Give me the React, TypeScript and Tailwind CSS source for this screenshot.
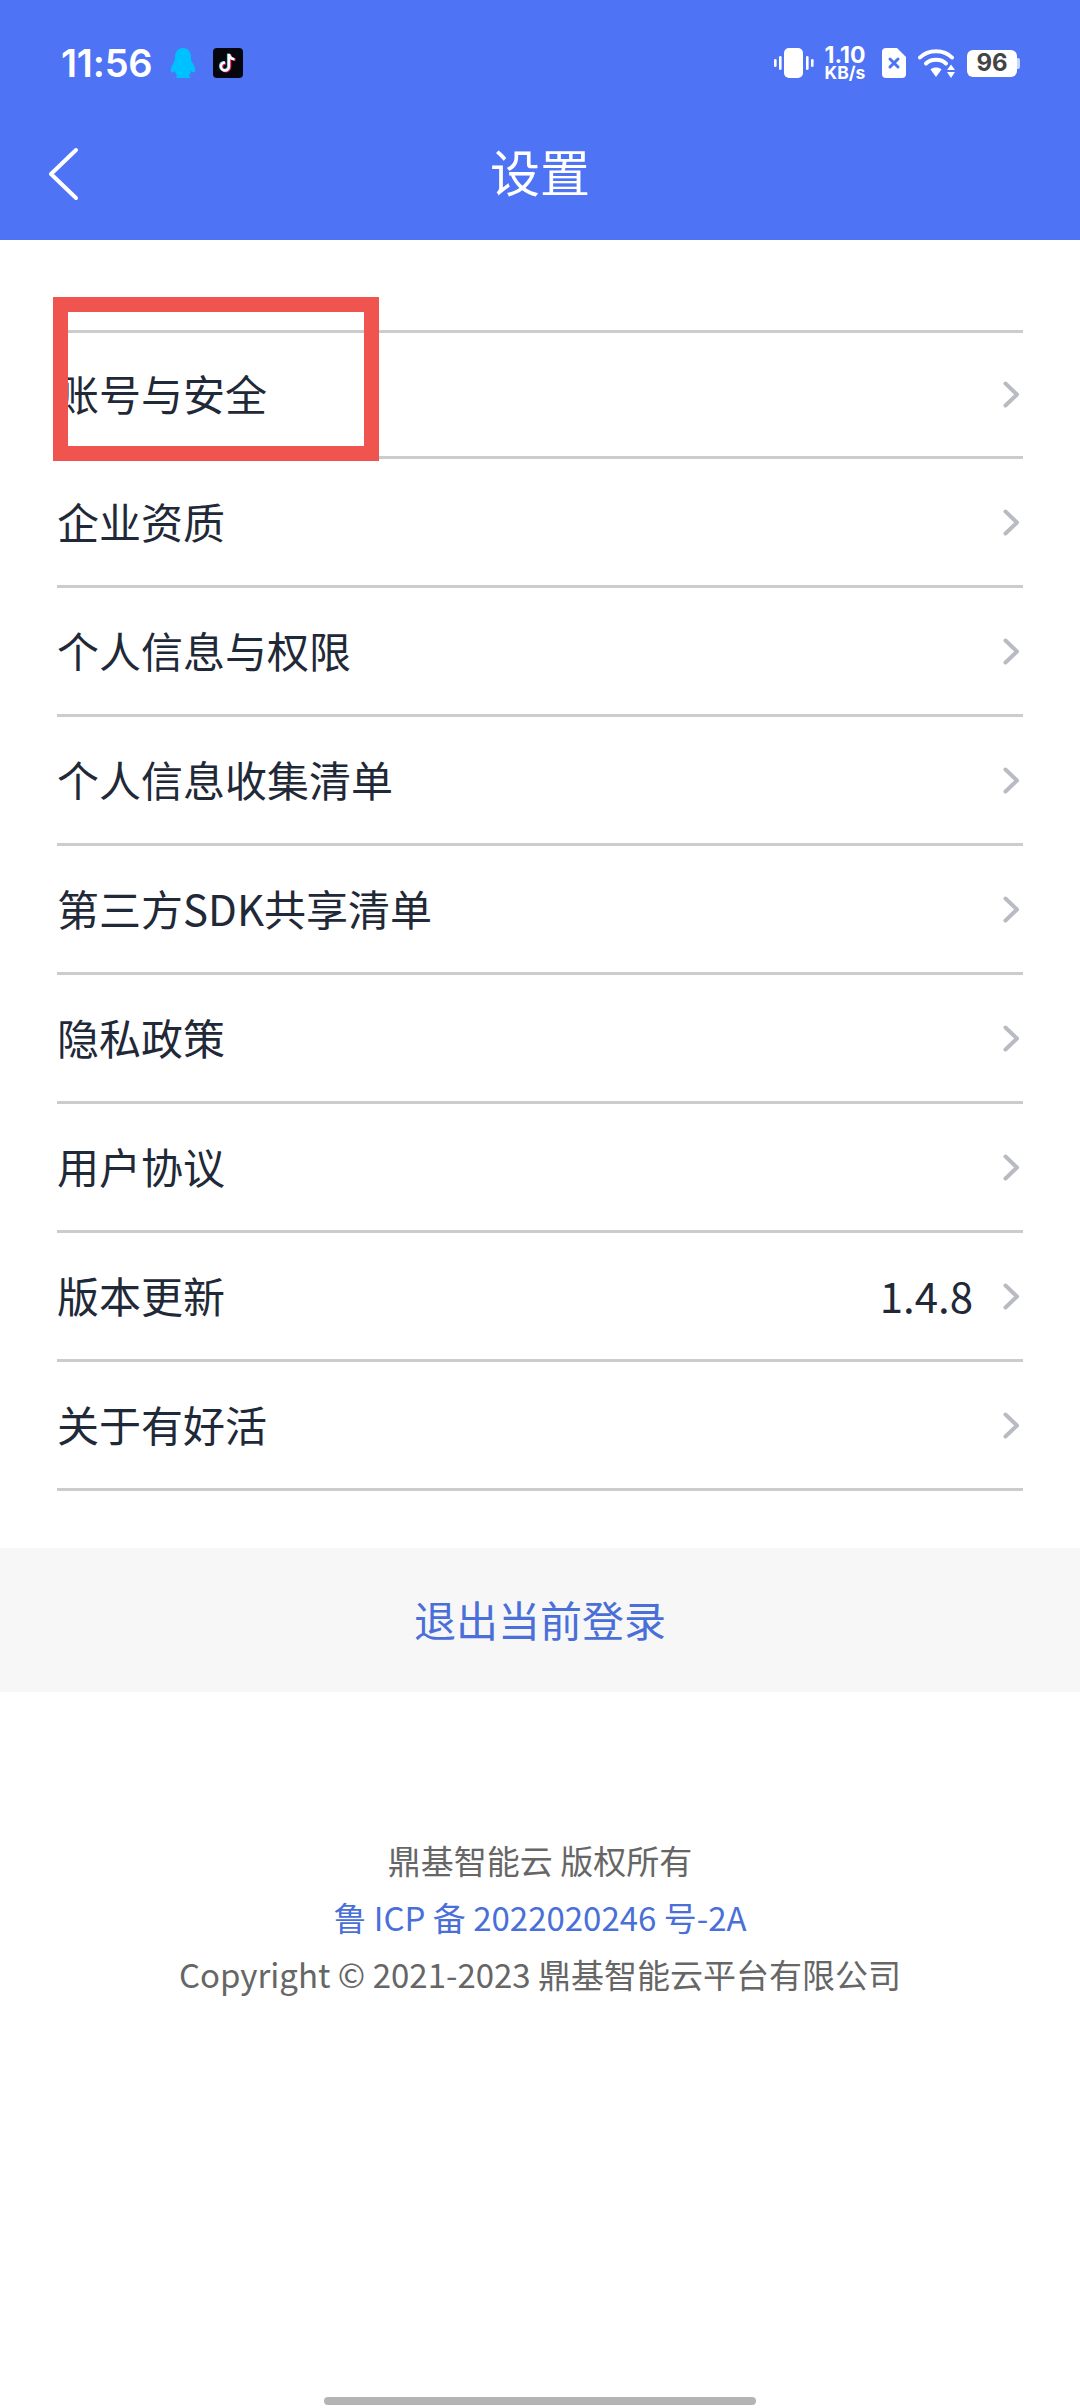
import React from 'react';

const rows = [
  { label: '账号与安全', h: 'h-[126px]' },
  { label: '企业资质' },
  { label: '个人信息与权限' },
  { label: '个人信息收集清单' },
  { label: '第三方SDK共享清单' },
  { label: '隐私政策' },
  { label: '用户协议' },
  { label: '版本更新', value: '1.4.8' },
  { label: '关于有好活' },
];

const cjk = "font-['Noto_Sans_CJK_SC','Noto_Sans',sans-serif]";

const Chevron = () => (
  <svg width="17" height="27" viewBox="0 0 17 27" fill="none" className="ml-[30px] mr-[3px]">
    <path d="M2.5 2.5 L14 13.5 L2.5 24.5" stroke="#b9bbc3" strokeWidth="4" strokeLinecap="round" strokeLinejoin="round" />
  </svg>
);

const StatusBar = () => (
  <div className="flex h-[96px] items-center justify-between pl-[61px] pr-[60px] pt-[30px]">
    <div className="flex items-center">
      <span className="font-['Inter',sans-serif] text-[38px] leading-none font-semibold tracking-[-0.2px] text-white">11:56</span>
      <svg width="26" height="30" viewBox="0 0 26 30" className="ml-[18px]">
        <path d="M13 0c5 0 8 4 8 9 0 2 0 3 1 5 2 3 4 7 3 10-1 1-3 0-4-1 0 2-1 3-2 4l1 3H6l1-3c-1-1-2-2-2-4-1 1-3 2-4 1-1-3 1-7 3-10 1-2 1-3 1-5 0-5 3-9 8-9z" fill="#00c1ff" />
      </svg>
      <div className="ml-[17px] flex h-[30px] w-[30px] items-center justify-center rounded-[4px] bg-[#06060f]">
        <svg width="20" height="22" viewBox="0 0 20 22" fill="none">
          <path d="M11 2v12.5a4 4 0 1 1-4-4M11 2c.5 3 2.5 5 5.5 5.3" stroke="#ee1d52" strokeWidth="2.6" transform="translate(1 .6)" />
          <path d="M11 2v12.5a4 4 0 1 1-4-4M11 2c.5 3 2.5 5 5.5 5.3" stroke="#69c9d0" strokeWidth="2.6" transform="translate(-.8 -.4)" />
          <path d="M11 2v12.5a4 4 0 1 1-4-4M11 2c.5 3 2.5 5 5.5 5.3" stroke="#ffffff" strokeWidth="2.4" />
        </svg>
      </div>
    </div>
    <div className="flex items-center text-white">
      <svg width="40" height="30" viewBox="0 0 40 30" fill="#fff">
        <rect x="10" y="0" width="19" height="30" rx="5" />
        <rect x="5" y="8" width="2.6" height="14" rx="1.3" />
        <rect x="0" y="11" width="2.6" height="8" rx="1.3" />
        <rect x="32" y="8" width="2.6" height="14" rx="1.3" />
        <rect x="37" y="11" width="2.6" height="8" rx="1.3" />
      </svg>
      <div className="ml-[8px] flex w-[46px] flex-col items-center font-['Inter',sans-serif] font-bold">
        <span className="text-[23px] leading-[20px]">1.10</span>
        <span className="text-[17.5px] leading-[16px]">KB/s</span>
      </div>
      <svg width="24" height="30" viewBox="0 0 24 30" className="ml-[14px]">
        <path d="M4 0h11l9 9v17a4 4 0 0 1-4 4H4a4 4 0 0 1-4-4V4a4 4 0 0 1 4-4z" fill="#fff" />
        <path d="M8 11l8 8M16 11l-8 8" stroke="#4e73f4" strokeWidth="3" strokeLinecap="round" />
      </svg>
      <svg width="38" height="30" viewBox="0 0 38 30" fill="none" className="ml-[12px]">
        <path d="M2 9.5C10 1 26 1 34 9.5" stroke="#fff" strokeWidth="4" strokeLinecap="round" />
        <path d="M8 15.5c5-5 15-5 20 0" stroke="#fff" strokeWidth="4" strokeLinecap="round" />
        <path d="M12.5 21.5c3-2.6 8-2.6 11 0L18 29z" fill="#fff" />
        <path d="M33 16.5l4 5.5h-8zM33 30l-4-6h8z" fill="#fff" />
      </svg>
      <div className="ml-[11px] flex items-center">
        <div className="flex h-[27px] w-[50px] items-center justify-center rounded-[6px] bg-white font-['Inter',sans-serif] text-[24px] leading-none font-bold text-[#444444]">96</div>
        <div className="h-[11px] w-[3px] rounded-r-[2px] bg-[#c9d5fb]" />
      </div>
    </div>
  </div>
);

export default function App() {
  return (
    <div className={`relative flex h-[2408px] w-[1080px] flex-col overflow-hidden bg-white ${cjk}`}>
      <div className="h-[240px] bg-[#4e73f4]">
        <StatusBar />
        <div className="relative flex h-[144px] items-center justify-center">
          <svg width="32" height="54" viewBox="0 0 32 54" fill="none" className="absolute left-[47px] top-[51px]">
            <path d="M29 3 L4 27 L29 51" stroke="#fff" strokeWidth="4" strokeLinecap="round" strokeLinejoin="round" />
          </svg>
          <span className="mt-[3px] text-[50px] leading-none text-white">设置</span>
        </div>
      </div>

      <div className="mx-[57px] mt-[90px] border-t-[3px] border-[#cccccc]">
        {rows.map((row) => (
          <div key={row.label} className={`flex items-center border-b-[3px] border-[#cccccc] ${row.h ?? 'h-[129px]'}`}>
            <span className="mb-[3px] flex-1 text-[42px] leading-none text-[#1f2937]">{row.label}</span>
            {row.value && <span className="mb-[3px] text-[42px] leading-none text-[#1f2937]">{row.value}</span>}
            <Chevron />
          </div>
        ))}
      </div>

      <div className="mt-[57px] flex h-[144px] items-center justify-center bg-[#f7f7f7] pb-[3px] text-[42px] text-[#4a6fd8]">退出当前登录</div>

      <div className="mt-[140px] flex flex-col items-center text-[33px] leading-[57px] text-[#666666]">
        <span>鼎基智能云 版权所有</span>
        <span className="text-[#4a6fd8]">鲁 ICP 备 2022020246 号-2A</span>
        <span>Copyright © 2021-2023 鼎基智能云平台有限公司</span>
      </div>

      {/* red annotation box */}
      <div className="absolute left-[53px] top-[297px] h-[164px] w-[326px] border-[15px] border-[#f0544f]" />
      <div className="absolute bottom-[3px] left-[324px] h-[8px] w-[432px] rounded-full bg-[#b4b4b4]" />
    </div>
  );
}
